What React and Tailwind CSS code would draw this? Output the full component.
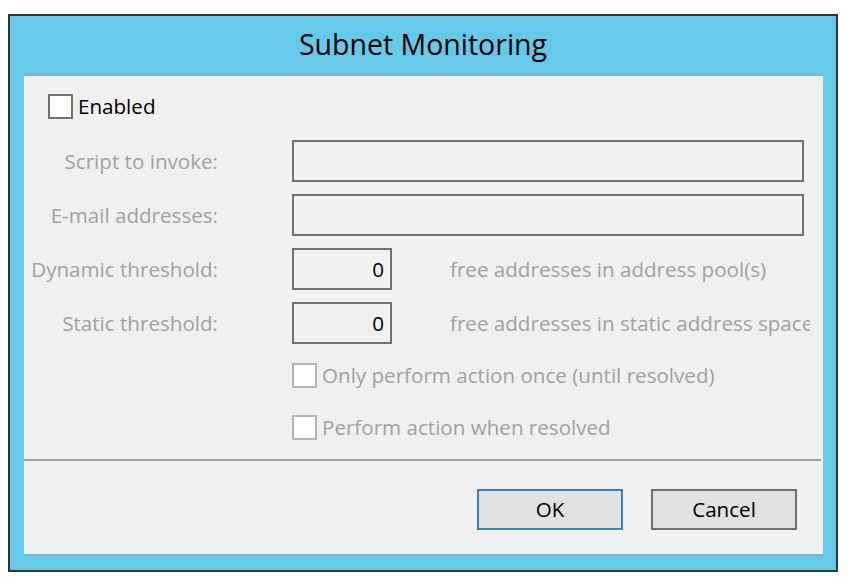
import React from "react";

const font = { fontFamily: '"Open Sans", "Noto Sans", sans-serif' };

function Row({ label, children }) {
  return (
    <div className="flex items-center h-[42px]">
      <div className="w-[194px] text-right text-[#a0a0a0] text-[20.6px] leading-none whitespace-nowrap">{label}</div>
      <div className="ml-[74px] flex items-center">{children}</div>
    </div>
  );
}

function NumRow({ label, suffix, clip }) {
  return (
    <Row label={label}>
      <div className="w-[100px] h-[42px] border-2 border-[#707070] bg-[#f0f0f0] flex items-center justify-end pr-[6px] text-[20.6px] text-black leading-none">0</div>
      <div className={"ml-[58px] w-[360px] whitespace-nowrap text-[#a0a0a0] text-[20.6px] leading-[26px] " + (clip ? "overflow-hidden" : "")}>{suffix}</div>
    </Row>
  );
}

function Check({ label, disabled }) {
  return (
    <div className="flex items-center h-[25px]">
      <div className={"w-[25px] h-[25px] border-2 bg-white " + (disabled ? "border-[#b4b4b4]" : "border-[#707070]")} />
      <span className={"ml-[5px] text-[20.6px] leading-none " + (disabled ? "text-[#a0a0a0]" : "text-black")}>{label}</span>
    </div>
  );
}

export default function App() {
  return (
    <div className="w-[848px] h-[588px] bg-white pt-[14px] pl-[8px]" style={font}>
      <div className="w-[830px] h-[558px] border-2 border-[#333333] bg-[#66c9e9] flex flex-col">
        <div className="h-[58px] flex items-center justify-center text-[28.5px] text-black leading-none pb-[2px]">
          Subnet Monitoring
        </div>
        <div className="ml-[14px] mr-[13px] h-[482px] bg-[#f0f0f0] border-t-2 border-b-2 border-[#7fb1c9] flex flex-col">
          <div className="pl-[24px] pt-[18px]">
            <Check label="Enabled" />
          </div>
          <div className="mt-[21px] flex flex-col gap-[12px]">
            <Row label="Script to invoke:">
              <div className="w-[512px] h-[42px] border-2 border-[#707070] bg-[#f0f0f0]" />
            </Row>
            <Row label="E-mail addresses:">
              <div className="w-[512px] h-[42px] border-2 border-[#707070] bg-[#f0f0f0]" />
            </Row>
            <NumRow label="Dynamic threshold:" suffix="free addresses in address pool(s)" />
            <NumRow label="Static threshold:" suffix="free addresses in static address space" clip />
          </div>
          <div className="ml-[268px] mt-[19px] flex flex-col gap-[27px]">
            <Check label="Only perform action once (until resolved)" disabled />
            <Check label="Perform action when resolved" disabled />
          </div>
          <div className="mt-[19px] mr-[2px] h-[2px] bg-[#a0a0a0]" />
          <div className="mt-[28px] flex justify-end gap-[28px] pr-[26px]">
            <button className="w-[146px] h-[41px] border-2 border-[#3c7fb1] bg-[#e1e1e1] text-[20.6px] text-black leading-none">OK</button>
            <button className="w-[146px] h-[41px] border-2 border-[#707070] bg-[#e1e1e1] text-[20.6px] text-black leading-none">Cancel</button>
          </div>
        </div>
      </div>
    </div>
  );
}
